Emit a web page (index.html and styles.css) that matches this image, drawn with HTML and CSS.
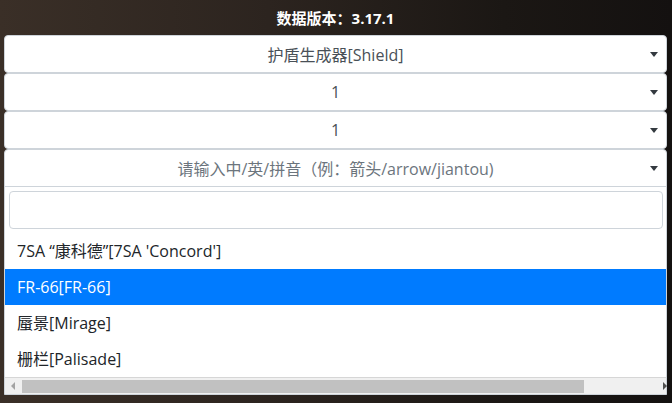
FILE: index.html
```html
<!DOCTYPE html>
<html lang="zh">
<head>
<meta charset="utf-8">
<link rel="stylesheet" href="styles.css">
</head>
<body>
<div class="page">
  <div class="version">数据版本：<b>3.17.1</b></div>
  <div class="stack">
    <div class="select"><span class="val">护盾生成器[Shield]</span><span class="caret"></span></div>
    <div class="select"><span class="val">1</span><span class="caret"></span></div>
    <div class="select"><span class="val">1</span><span class="caret"></span></div>
    <div class="select open">
      <div class="select-head"><span class="val ph">请输入中/英/拼音（例：箭头/arrow/jiantou)</span><span class="caret"></span></div>
      <div class="dropdown">
        <div class="search"></div>
        <ul class="options">
          <li>7SA “康科德”[7SA 'Concord']</li>
          <li class="active">FR-66[FR-66]</li>
          <li>蜃景[Mirage]</li>
          <li>栅栏[Palisade]</li>
        </ul>
        <div class="hscroll">
          <span class="arr left"></span>
          <div class="track"><div class="thumb"></div></div>
          <span class="arr right"></span>
        </div>
      </div>
    </div>
  </div>
</div>
</body>
</html>
```

FILE: styles.css
```css
html, body {
  margin: 0;
  height: 100%;
}
body {
  background: linear-gradient(90deg, #3a2f27 0%, #2c241f 40%, #1b1714 75%, #141110 100%);
  font-family: "Open Sans", "Noto Sans CJK SC", sans-serif;
  overflow: hidden;
}
.page {
  padding: 0 5px 0 4px;
}
.version {
  height: 35px;
  line-height: 36px;
  text-align: center;
  color: #fff;
  font-size: 15px;
  font-weight: bold;
}
.version b {
  font-weight: bold;
}
.stack {
  display: flex;
  flex-direction: column;
}
.select {
  position: relative;
  height: 38px;
  box-sizing: border-box;
  background: #fff;
  border: 1px solid #ced4da;
  border-radius: 4px;
  display: flex;
  align-items: center;
  justify-content: center;
  color: #495057;
  font-size: 16px;
}
.select.open {
  height: auto;
  display: block;
  border-radius: 4px 4px 0 0;
}
.select-head {
  height: 36px;
  display: flex;
  align-items: center;
  justify-content: center;
  border-bottom: 1px solid #ced4da;
}
.val {
  white-space: nowrap;
}
.ph {
  color: #6c757d;
}
.caret {
  position: absolute;
  right: 8px;
  top: 16px;
  width: 0;
  height: 0;
  border-left: 4px solid transparent;
  border-right: 4px solid transparent;
  border-top: 5px solid #343a40;
}
.dropdown {
  padding: 4px 3px 0 4px;
}
.search {
  height: 38px;
  box-sizing: border-box;
  border: 1px solid #ced4da;
  border-radius: 4px;
  background: #fff;
}
.options {
  list-style: none;
  margin: 4px -3px 0 -4px;
  padding: 0;
  border-bottom: 1px solid #d6d6d6;
}
.options li {
  height: 36px;
  line-height: 36px;
  padding-left: 12px;
  color: #212529;
  font-size: 16px;
  white-space: nowrap;
}
.options li.active {
  background: #007bff;
  color: #fff;
}
.hscroll {
  margin: 0 -3px 0 -4px;
  height: 16px;
  background: #f0f0f0;
  display: flex;
  align-items: center;
}
.track {
  flex: 1;
  height: 100%;
  display: flex;
  align-items: center;
  padding: 0 2px;
}
.thumb {
  width: 562px;
  height: 13px;
  background: #c1c1c1;
}
.arr {
  width: 0;
  height: 0;
  border-top: 4px solid transparent;
  border-bottom: 4px solid transparent;
}
.arr.left {
  margin-left: 6px;
  border-right: 4px solid #a3a3a3;
  margin-right: 5px;
}
.arr.right {
  margin-right: 5px;
  margin-left: 77px;
  border-left: 4px solid #505050;
}
```
